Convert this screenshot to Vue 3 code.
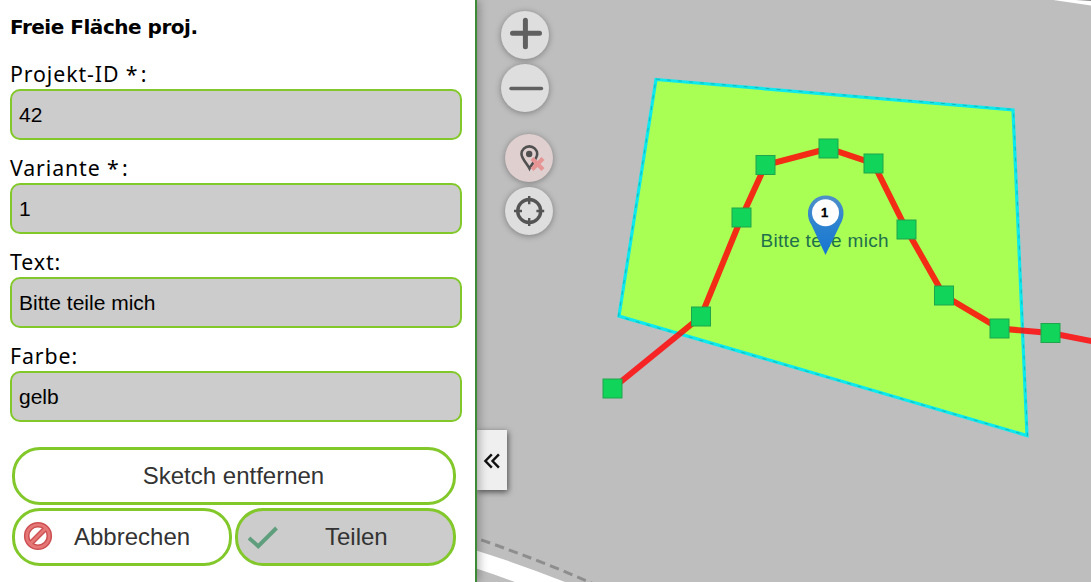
<script setup>
const fields = [
  { label: 'Projekt-ID', required: true, value: '42' },
  { label: 'Variante', required: true, value: '1' },
  { label: 'Text:', value: 'Bitte teile mich' },
  { label: 'Farbe:', value: 'gelb' },
]
const vertices = [
  [612.5, 388.5], [701, 316.5], [741.5, 217.5], [765.5, 165], [828.5, 148.5],
  [873.5, 163.5], [906.5, 229.5], [944, 295.5], [999.5, 328.5], [1050.5, 333],
]
const line = [...vertices, [1096, 342]].map((p) => p.join(',')).join(' ')
</script>

<template>
  <div class="page">
    <aside class="panel">
      <h1>Freie Fläche proj.</h1>
      <div v-for="f in fields" :key="f.label" class="field">
        <label>{{ f.label }}<template v-if="f.required">&nbsp;<span class="star">*</span>:</template></label>
        <div class="value">{{ f.value }}</div>
      </div>
      <div class="actions">
        <button class="wide">Sketch entfernen</button>
        <button class="cancel">
          <svg width="30" height="30" viewBox="0 0 30 30">
            <circle cx="15" cy="15" r="11.3" fill="none" stroke="#cd5052" stroke-width="5.6" />
            <path d="M7.5 22.5 22.5 7.5" stroke="#cd5052" stroke-width="5.4" />
            <circle cx="15" cy="15" r="11.3" fill="none" stroke="#e67777" stroke-width="2.6" />
            <path d="M7 23 23 7" stroke="#e67777" stroke-width="2.6" />
          </svg>
          <span>Abbrechen</span>
        </button>
        <button class="share">
          <svg width="32" height="24" viewBox="0 0 32 24">
            <path d="M2 12 11.2 20.2 29.5 2" fill="none" stroke="#5f9f7d" stroke-width="3.9" />
          </svg>
          <span>Teilen</span>
        </button>
      </div>
    </aside>
    <main class="map">
      <svg class="canvas" width="614" height="582" viewBox="477 0 614 582">
        <defs>
          <linearGradient id="pin" x1="0" y1="0" x2="0" y2="1">
            <stop offset="0" stop-color="#4e8fc8" />
            <stop offset=".5" stop-color="#2c82cf" />
            <stop offset="1" stop-color="#1675d2" />
          </linearGradient>
          <filter id="soft"><feGaussianBlur stdDeviation=".7" /></filter>
        </defs>
        <path d="M1050-3 1095 3.5" stroke="#fff" stroke-width="5" fill="none" />
        <path d="M1076-1 1091 0" stroke="#888" stroke-width="2" fill="none" />
        <path d="M470 548.5Q520 564 570 584L520 584Q497 575 470 566.5Z" fill="#fff" />
        <path d="M467 535Q535 558 596 585" stroke="#8e8e8e" stroke-width="3" stroke-dasharray="9.5 5.2" stroke-dashoffset="0" fill="none" filter="url(#soft)" />
        <path d="M656 79.5 1013 110 1027 435.5 619 316Z" fill="#a9ff54" stroke="#0de9ed" stroke-width="3.2" />
        <path d="M656 79 1013.5 109.5 1027.5 435.5 618.5 316.5Z" fill="none" stroke="#148f93" stroke-width=".8" stroke-dasharray="4 7" opacity=".7" />
        <text class="map-text" x="760.5" y="247">Bitte teile mich</text>
        <polyline :points="line" fill="none" stroke="#ff0a0a" stroke-opacity=".86" stroke-width="6" />
        <rect v-for="(p, i) in vertices" :key="i" :x="p[0] - 9.5" :y="p[1] - 9.5" width="19" height="19" fill="#11d45b" stroke="#1fa64c" />
        <path d="M825.5 255 811.5 225C807.5 219 808 213 808 213A17.7 17.5 0 0 1 843.5 213C843.5 219 841 223 839.5 226Z" fill="url(#pin)" />
        <circle cx="825.5" cy="212.8" r="13.5" fill="#fff" />
        <text class="pin-text" x="824.5" y="217.3" text-anchor="middle">1</text>
      </svg>
      <nav class="tools">
        <button aria-label="Vergrößern">
          <svg width="48" height="48"><path d="M24.4 9.2V35.8M11.5 22.2H38.5" stroke="#606060" stroke-width="5" stroke-linecap="round" /></svg>
        </button>
        <button aria-label="Verkleinern">
          <svg width="48" height="48"><path d="M10 24.5H40.5" stroke="#606060" stroke-width="3.4" stroke-linecap="round" /></svg>
        </button>
        <button class="marker" aria-label="Marker entfernen">
          <svg width="48" height="48" fill="none">
            <path d="M24.5 34.5C22 29.5 16.5 24.5 16.5 20A7.8 7.6 0 0 1 32.2 20C32.2 24.5 27 29.5 24.5 34.5Z" stroke="#505050" stroke-width="2.6" />
            <circle cx="24.2" cy="20" r="3.2" fill="#505050" />
            <path d="M27 24.5 38 35.5M38 24.5 27 35.5" stroke="#e79494" stroke-width="4.2" />
          </svg>
        </button>
        <button class="locate" aria-label="Standort">
          <svg width="48" height="48" fill="none" stroke="#555">
            <circle cx="24.2" cy="24" r="11.5" stroke-width="3.4" />
            <path d="M24.2 9V17.2M24.2 31V39M9 24H17M31.4 24H39.2" stroke-width="2.4" />
          </svg>
        </button>
      </nav>
      <button class="toggle" aria-label="Einklappen">
        <svg width="20" height="18" viewBox="0 0 20 18" fill="none" stroke="#111" stroke-width="2.4">
          <path d="M9.8 2.3 3.4 9 9.8 15.7M16.9 2.3 10.5 9 16.9 15.7" />
        </svg>
      </button>
    </main>
  </div>
</template>

<style>
body { overflow: hidden; }
</style>

<style scoped>
* { box-sizing: border-box; }
.page { display: flex; width: 1091px; height: 582px; background: #fff; }
.panel {
  width: 477px; flex: none; border-right: 2px solid #3d8a35; background: #fff;
  padding: 12px 13px 0 10px; position: relative; z-index: 1;
  box-shadow: 2px 0 9px rgba(0, 0, 0, .3);
}
h1 { margin: 0 0 18px; font: bold 20px/30px "DejaVu Sans", sans-serif; letter-spacing: -.48px; color: #000; white-space: nowrap; }
.field { height: 94px; }
label { display: block; height: 29px; font: 21.3px/27px "Noto Sans", sans-serif; letter-spacing: .9px; color: #000; white-space: nowrap; }
.star { letter-spacing: 3.2px; }
.value {
  height: 51px; border: 2px solid #82c82b; border-radius: 10px; background: #ccc;
  padding-left: 7px; font: 21px/47px "Liberation Sans", Arial, sans-serif; color: #000;
}
.actions { display: grid; grid-template-columns: 220px 221px; gap: 3px; padding-left: 2px; margin-top: 11px; }
button { border: 0; padding: 0; margin: 0; }
.actions button {
  height: 58px; border: 3px solid #82c82b; border-radius: 28px; background: #fff; display: flex;
  align-items: center; font: 24px/28px "Liberation Sans", Arial, sans-serif; color: #333;
}
.actions .wide { grid-column: 1 / 3; justify-content: center; padding-right: 1px; }
.actions .cancel svg { margin-left: 8px; margin-top: -2px; }
.actions .cancel span { margin-left: 21px; }
.actions .share { background: #ccc; }
.actions .share svg { margin-left: 9px; margin-top: 1px; }
.actions .share span { margin-left: 46px; }
.map { position: relative; flex: 1; background: #bebebe; overflow: hidden; }
.canvas { display: block; }
.map-text { font: 19px "Liberation Sans", Arial, sans-serif; letter-spacing: .3px; fill: #20704c; }
.pin-text { font: bold 13px "Liberation Sans", Arial, sans-serif; fill: #000; stroke: #000; stroke-width: .3px; }
.tools { position: absolute; left: 24px; top: 11px; display: flex; flex-direction: column; gap: 5px; }
.tools button { width: 48px; height: 48px; border-radius: 50%; background: #dedede; box-shadow: 0 1px 6px rgba(0, 0, 0, .35); }
.tools svg { display: block; }
.tools .marker { margin: 17px 0 0 4px; background: #dfcfcf; }
.tools .locate { margin-left: 4px; }
.toggle {
  position: absolute; left: 0; top: 430px; width: 30px; height: 60px; background: #efefef;
  display: flex; align-items: center; justify-content: center; padding-top: 1px; box-shadow: 1px 2px 6px rgba(0, 0, 0, .6);
}
</style>
